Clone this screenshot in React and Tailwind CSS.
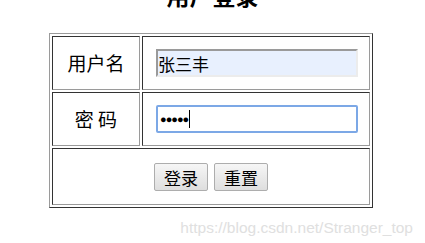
import React from 'react'

const cjk = { fontFamily: '"Noto Sans CJK SC", "Liberation Sans", sans-serif' }

function Field({ children, focused }) {
  return (
    <div
      className={
        focused
          ? 'flex h-[28px] w-[202px] items-center rounded-[2px] border-2 border-[#7ca8e6] bg-white pl-[2px]'
          : 'flex h-[28px] w-[202px] items-center border-2 border-t-[#9a9a9a] border-l-[#9a9a9a] border-r-[#ececec] border-b-[#ececec] bg-[#e8f0fe]'
      }
    >
      {children}
    </div>
  )
}

export default function App() {
  return (
    <div className="relative h-[243px] w-[425px] overflow-hidden bg-white text-black" style={cjk}>
      <h2 className="mt-[-16px] mb-[26px] text-center text-[23px] font-bold leading-none">用户登录</h2>
      <table className="ml-[49px] w-[324px] table-fixed border-separate border-spacing-[2px] border border-t-[#9a9a9a] border-l-[#9a9a9a] border-r-[#333] border-b-[#333]">
        <tbody>
          <tr>
            <td className="h-[54px] w-[88px] border border-t-[#333] border-l-[#333] border-r-[#9a9a9a] border-b-[#9a9a9a] text-center text-[19px]">
              用户名
            </td>
            <td className="h-[54px] border border-t-[#333] border-l-[#333] border-r-[#9a9a9a] border-b-[#9a9a9a] pl-[13px]">
              <Field>
                <span className="text-[17px] leading-none">张三丰</span>
              </Field>
            </td>
          </tr>
          <tr>
            <td className="h-[54px] border border-t-[#333] border-l-[#333] border-r-[#9a9a9a] border-b-[#9a9a9a] text-center text-[19px]">
              密 码
            </td>
            <td className="h-[54px] border border-t-[#333] border-l-[#333] border-r-[#9a9a9a] border-b-[#9a9a9a] pl-[13px]">
              <Field focused>
                <span className="text-[11px] leading-none tracking-[-1px]" style={{ fontFamily: '"Liberation Sans", sans-serif' }}>
                  ●●●●●
                </span>
                <span className="ml-[1px] h-[18px] w-[1px] bg-black" />
              </Field>
            </td>
          </tr>
          <tr>
            <td
              colSpan={2}
              className="h-[57px] border border-t-[#333] border-l-[#333] border-r-[#9a9a9a] border-b-[#9a9a9a]"
            >
              <div className="flex justify-center gap-[6px] pt-[1px]">
                <button className="h-[28px] w-[54px] rounded-[2px] border border-[#adadad] bg-gradient-to-b from-[#f6f6f6] to-[#dedede] text-[17px] leading-none">
                  登录
                </button>
                <button className="h-[28px] w-[54px] rounded-[2px] border border-[#adadad] bg-gradient-to-b from-[#f6f6f6] to-[#dedede] text-[17px] leading-none">
                  重置
                </button>
              </div>
            </td>
          </tr>
        </tbody>
      </table>
      <span
        className="absolute right-[12px] top-[216px] text-[15.5px] text-[#e0e0e0]"
        style={{ fontFamily: '"Liberation Sans", sans-serif' }}
      >
        https://blog.csdn.net/Stranger_top
      </span>
    </div>
  )
}
